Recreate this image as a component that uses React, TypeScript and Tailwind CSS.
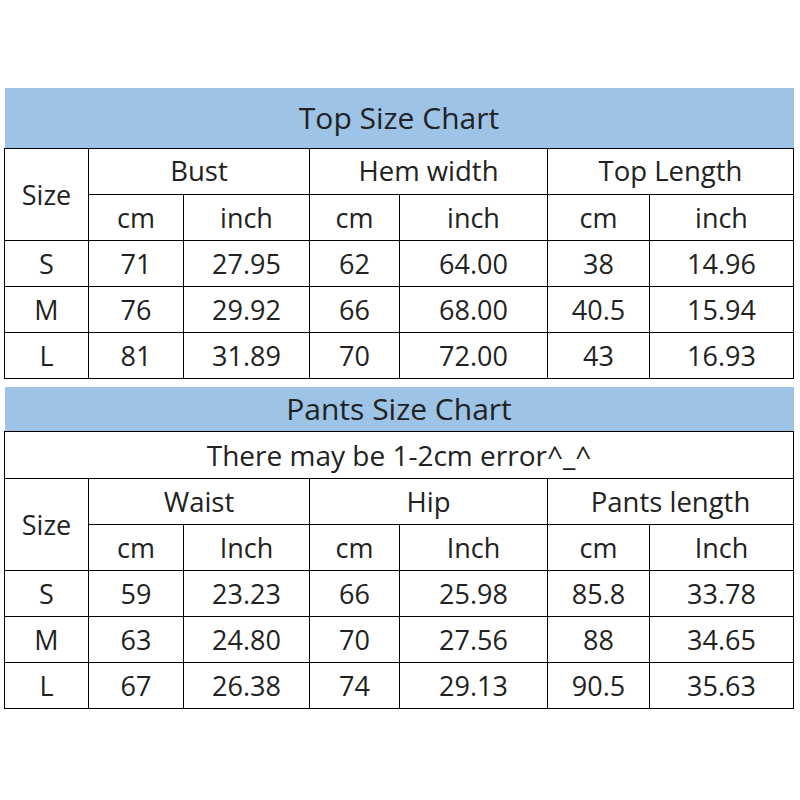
const topRows = [
  ['S', '71', '27.95', '62', '64.00', '38', '14.96'],
  ['M', '76', '29.92', '66', '68.00', '40.5', '15.94'],
  ['L', '81', '31.89', '70', '72.00', '43', '16.93'],
]

const pantsRows = [
  ['S', '59', '23.23', '66', '25.98', '85.8', '33.78'],
  ['M', '63', '24.80', '70', '27.56', '88', '34.65'],
  ['L', '67', '26.38', '74', '29.13', '90.5', '35.63'],
]

const COL_WIDTHS = [84, 95, 126, 90, 148, 102, 144]

const cell = 'border border-black text-center font-normal p-0'

function Colgroup() {
  return (
    <colgroup>
      {COL_WIDTHS.map((w, i) => (
        <col key={i} style={{ width: w }} />
      ))}
    </colgroup>
  )
}

function SizeTable({
  title,
  titleHeight,
  note,
  groups,
  unit,
  rows,
}: {
  title: string
  titleHeight: string
  note?: string
  groups: string[]
  unit: string
  rows: string[][]
}) {
  return (
    <table className="table-fixed border-collapse w-[789px]">
      <Colgroup />
      <tbody>
        <tr className={titleHeight}>
          <td colSpan={7} className="bg-[#9dc3e6] text-center p-0 border-b border-black text-[30px]">
            {title}
          </td>
        </tr>
        {note && (
          <tr className="h-[47px]">
            <td colSpan={7} className={cell + ' text-[28px]'}>
              {note}
            </td>
          </tr>
        )}
        <tr className="h-[46px]">
          <td rowSpan={2} className={cell + ' text-[27px]'}>
            Size
          </td>
          {groups.map((g) => (
            <td key={g} colSpan={2} className={cell + ' text-[27.5px]'}>
              {g}
            </td>
          ))}
        </tr>
        <tr className="h-[46px]">
          {groups.map((g) => (
            <>
              <td key={g + 'cm'} className={cell + ' text-[27px]'}>
                cm
              </td>
              <td key={g + 'in'} className={cell + ' text-[27px]'}>
                {unit}
              </td>
            </>
          ))}
        </tr>
        {rows.map((r) => (
          <tr key={r[0]} className="h-[46px]">
            {r.map((v, i) => (
              <td key={i} className={cell + ' text-[27px]'}>
                {v}
              </td>
            ))}
          </tr>
        ))}
      </tbody>
    </table>
  )
}

export default function App() {
  return (
    <div className="w-[800px] h-[800px] bg-white pt-[88px] pl-[4px] text-[#222] font-['Open_Sans',sans-serif] leading-none">
      <SizeTable
        title="Top Size Chart"
        titleHeight="h-[60px]"
        groups={['Bust', 'Hem width', 'Top Length']}
        unit="inch"
        rows={topRows}
      />
      <div className="h-[8px]" />
      <SizeTable
        title="Pants Size Chart"
        titleHeight="h-[45px]"
        note="There may be 1-2cm error^_^"
        groups={['Waist', 'Hip', 'Pants length']}
        unit="Inch"
        rows={pantsRows}
      />
    </div>
  )
}
